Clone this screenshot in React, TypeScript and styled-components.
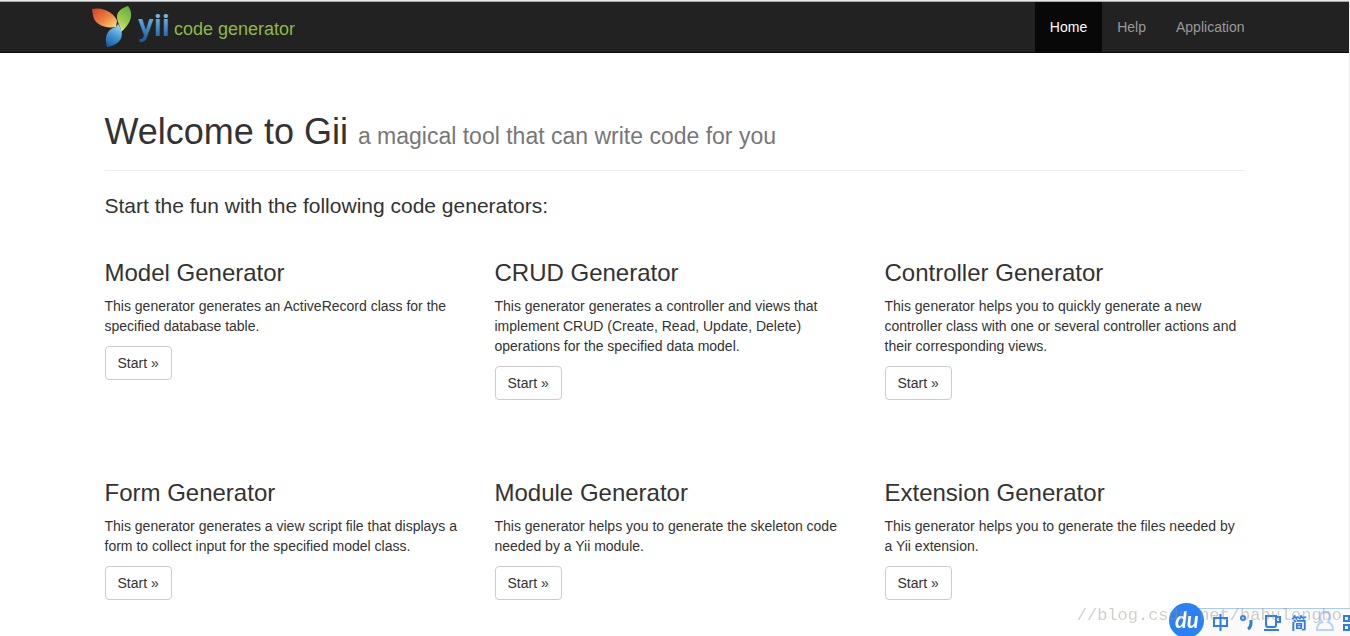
import React from 'react';
import styled, { createGlobalStyle } from 'styled-components';

const GlobalStyle = createGlobalStyle`
  *, *::before, *::after { box-sizing: border-box; }
  body {
    margin: 0;
    background: #fff;
    color: #333;
    font: 14px/20px "Liberation Sans", Arial, sans-serif;
  }
`;

const Page = styled.div`
  min-height: 100vh;
  border-top: 1px solid #e4e6e8;
  border-right: 1px solid #ececec;
`;

const Navbar = styled.header`
  background: #222;
  border-top: 1px solid #a9abad;
  border-bottom: 1px solid #080808;
`;

const Container = styled.div`
  max-width: 1170px;
  margin: 0 auto;
  padding: 0 15px;
`;

const NavInner = styled(Container)`
  display: flex;
  justify-content: space-between;
  padding: 0;
`;

const Brand = styled.a`
  display: flex;
  height: 50px;
`;

const NavLinks = styled.nav`
  display: flex;
`;

const NavLink = styled.a<{ $active?: boolean }>`
  padding: 15px;
  text-decoration: none;
  color: ${(p) => (p.$active ? '#fff' : '#999')};
  background: ${(p) => (p.$active ? '#080808' : 'transparent')};
`;

const PageHeader = styled.div`
  padding: 59px 0 18px;
  border-bottom: 1px solid #eee;
`;

const Title = styled.h1`
  margin: 0;
  font-size: 36px;
  font-weight: 400;
  line-height: 40px;
`;

const Subtitle = styled.small`
  font-size: 23px;
  line-height: 23px;
  color: #777;
`;

const Lead = styled.p`
  margin: 20px 0 40px;
  font-size: 21px;
  line-height: 29px;
`;

const Generators = styled.div`
  display: grid;
  grid-template-columns: repeat(3, 1fr);
  column-gap: 30px;
  row-gap: 80px;
`;

const CardTitle = styled.h3`
  margin: 0 0 10px;
  font-size: 24px;
  font-weight: 400;
  line-height: 26px;
`;

const CardText = styled.p`
  margin: 0 0 10px;
`;

const StartButton = styled.button`
  padding: 6px 12px;
  border: 1px solid #ccc;
  border-radius: 4px;
  background: #fff;
  color: #333;
  font: inherit;
`;

const InputBar = styled.div`
  position: fixed;
  right: 0;
  bottom: 0;
  width: 181px;
  height: 33px;
  overflow: hidden;
`;

const Watermark = styled.div`
  position: fixed;
  right: 8px;
  bottom: 8px;
  font: 17px/24px "Liberation Mono", monospace;
  color: rgba(150, 150, 140, 0.45);
  white-space: nowrap;
  pointer-events: none;
`;

const YiiLogo = () => (
  <svg width="210" height="50" viewBox="0 0 210 50" role="img" aria-label="Yii code generator">
    <defs>
      <linearGradient id="orange" x1="0" y1="0" x2="1" y2="1">
        <stop offset="0" stopColor="#d63c28" />
        <stop offset="0.55" stopColor="#ee8440" />
        <stop offset="1" stopColor="#fbe08a" />
      </linearGradient>
      <linearGradient id="green" x1="0.7" y1="0" x2="0.3" y2="1">
        <stop offset="0" stopColor="#68ad3e" />
        <stop offset="0.6" stopColor="#a0cc4c" />
        <stop offset="1" stopColor="#dcea90" />
      </linearGradient>
      <linearGradient id="blue" x1="0.7" y1="0" x2="0.3" y2="1">
        <stop offset="0" stopColor="#a8d8f0" />
        <stop offset="0.45" stopColor="#4a9bd4" />
        <stop offset="1" stopColor="#1760aa" />
      </linearGradient>
      <linearGradient id="word" x1="0" y1="0" x2="0" y2="1">
        <stop offset="0.1" stopColor="#8accf0" />
        <stop offset="0.9" stopColor="#155fa8" />
      </linearGradient>
    </defs>
    <path d="M2 7C14 4 26 13 27 19L26 25C14 27 4 22 3 13Z" fill="url(#orange)" />
    <path d="M38 4C43 10 43 20 31 30C31 24 27 21 27 15C27 9 32 6 38 4Z" fill="url(#green)" />
    <path d="M28 22C36 33 31 43 17 45C14 35 17 27 26 25Z" fill="url(#blue)" />
    <text x="48" y="34" fontFamily="Roboto, sans-serif" fontWeight="500" fontSize="32" fill="url(#word)">yii</text>
    <text x="84" y="33" fontFamily="Liberation Sans, Arial, sans-serif" fontSize="18" fill="#8cba45">code generator</text>
  </svg>
);

const InputTools = () => (
  <svg width="181" height="34" viewBox="0 0 181 34" role="img" aria-label="Input method">
    <path d="M18 5H181V34H18Z" fill="#fafafa" />
    <path d="M18 5.5H181" stroke="#a9cbfa" />
    <circle cx="17.5" cy="17.5" r="17.5" fill="#2b80f8" />
    <text x="6" y="25" fontFamily="Lato, sans-serif" fontStyle="italic" fontWeight="700" fontSize="22" fill="#fff">du</text>
    <g fill="none" stroke="#2d7bf0" strokeWidth="2">
      <path d="M45 15H58V23H45ZM51.5 11V28" />
      <circle cx="74" cy="15" r="2" />
      <path d="M82 17V20Q82 24 79 26" strokeWidth="3" />
      <path d="M97 13H107V22Q107 24 105 24H99Q97 24 97 22ZM107 14H111V19H107M95 27H110" />
      <path d="M175 13H180V18H175ZM175 22H180V27H175Z" />
    </g>
    <text x="122" y="26" fontFamily="Noto Sans CJK SC, sans-serif" fontWeight="700" fontSize="16" fill="#2d7bf0">简</text>
    <g fill="none" stroke="#b7d3fc" strokeWidth="2">
      <path d="M153 19C150 16 150 9 156 9C162 9 162 16 159 19C162 20 164 23 164 27H148C148 23 150 20 153 19Z" />
    </g>
  </svg>
);

const generators = [
  { name: 'Model Generator', text: 'This generator generates an ActiveRecord class for the specified database table.' },
  { name: 'CRUD Generator', text: 'This generator generates a controller and views that implement CRUD (Create, Read, Update, Delete) operations for the specified data model.' },
  { name: 'Controller Generator', text: 'This generator helps you to quickly generate a new controller class with one or several controller actions and their corresponding views.' },
  { name: 'Form Generator', text: 'This generator generates a view script file that displays a form to collect input for the specified model class.' },
  { name: 'Module Generator', text: 'This generator helps you to generate the skeleton code needed by a Yii module.' },
  { name: 'Extension Generator', text: 'This generator helps you to generate the files needed by a Yii extension.' },
];

export default function App() {
  return (
    <Page>
      <GlobalStyle />
      <Navbar>
        <NavInner>
          <Brand href="#"><YiiLogo /></Brand>
          <NavLinks>
            <NavLink href="#" $active>Home</NavLink>
            <NavLink href="#">Help</NavLink>
            <NavLink href="#">Application</NavLink>
          </NavLinks>
        </NavInner>
      </Navbar>
      <Container as="main">
        <PageHeader>
          <Title>Welcome to Gii <Subtitle>a magical tool that can write code for you</Subtitle></Title>
        </PageHeader>
        <Lead>Start the fun with the following code generators:</Lead>
        <Generators>
          {generators.map((g) => (
            <section key={g.name}>
              <CardTitle>{g.name}</CardTitle>
              <CardText>{g.text}</CardText>
              <StartButton type="button">Start »</StartButton>
            </section>
          ))}
        </Generators>
      </Container>
      <InputBar><InputTools /></InputBar>
      <Watermark>//blog.csdn.net/babulongbo</Watermark>
    </Page>
  );
}
